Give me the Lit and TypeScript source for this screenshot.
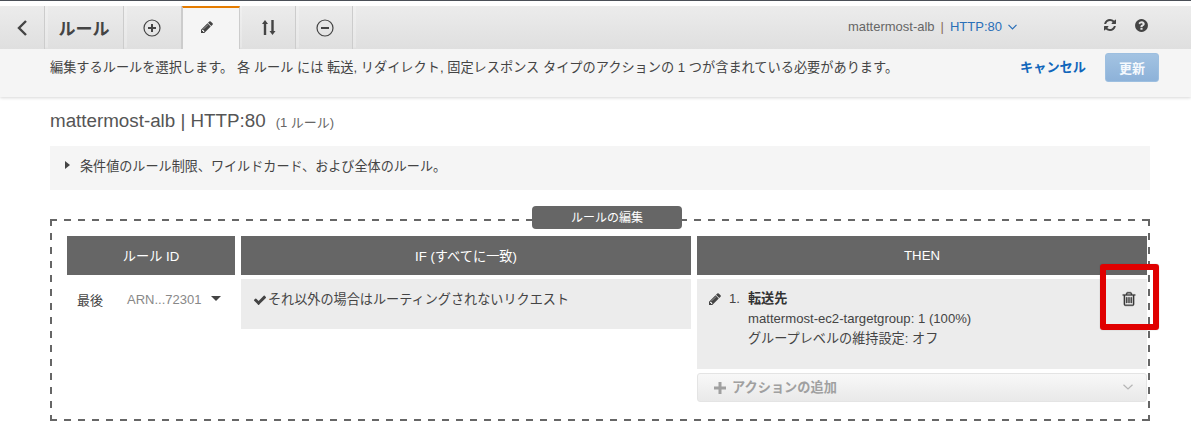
import { LitElement, html, css, svg } from "lit";
import { customElement } from "lit/decorators.js";

const P = {
  pencil: "M491 1536l91-91-235-235-91 91v107h128v128h107zm523-928q0-22-22-22-10 0-17 7l-542 542q-7 7-7 17 0 22 22 22 10 0 17-7l542-542q7-7 7-17zm-54-192l416 416-832 832h-416v-416zm683 96q0 53-37 90l-166 166-416-416 166-165q36-38 90-38 53 0 91 38l235 234q37 39 37 91z",
  trash: "M704 736v576q0 14-9 23t-23 9h-64q-14 0-23-9t-9-23v-576q0-14 9-23t23-9h64q14 0 23 9t9 23zm256 0v576q0 14-9 23t-23 9h-64q-14 0-23-9t-9-23v-576q0-14 9-23t23-9h64q14 0 23 9t9 23zm256 0v576q0 14-9 23t-23 9h-64q-14 0-23-9t-9-23v-576q0-14 9-23t23-9h64q14 0 23 9t9 23zm128 724v-948h-896v948q0 22 7 40.500t14.500 27 10.500 8.500h832q3 0 10.500-8.500t14.500-27 7-40.500zm-672-1076h448l-48-117q-7-9-17-11h-317q-10 2-17 11zm928 32v64q0 14-9 23t-23 9h-96v948q0 83-47 143.500t-113 60.500h-832q-66 0-113-58.500t-47-141.500v-952h-96q-14 0-23-9t-9-23v-64q0-14 9-23t23-9h309l70-167q15-37 54-63t79-26h320q40 0 79 26t54 63l70 167h309q14 0 23 9t9 23z",
  check: "M1671 566q0 40-28 68l-724 724-136 136q-28 28-68 28t-68-28l-136-136-362-362q-28-28-28-68t28-68l136-136q28-28 68-28t68 28l294 295 656-657q28-28 68-28t68 28l136 136q28 28 28 68z",
  refresh: "M1639 1056q0 5-1 7-64 268-268 434.500t-478 166.500q-146 0-282.500-55t-243.500-157l-129 129q-19 19-45 19t-45-19-19-45v-448q0-26 19-45t45-19h448q26 0 45 19t19 45-19 45l-137 137q71 66 161 102t187 36q134 0 250-65t186-179q11-17 53-117 8-23 30-23h192q13 0 22.500 9.500t9.500 22.500zm25-800v448q0 26-19 45t-45 19h-448q-26 0-45-19t-19-45 19-45l138-138q-148-137-349-137-134 0-250 65t-186 179q-11 17-53 117-8 23-30 23h-199q-13 0-22.500-9.500t-9.500-22.500v-7q65-268 270-434.500t480-166.500q146 0 284 55.500t245 156.500l130-129q19-19 45-19t45 19 19 45z",
  help: "M1024 1376v-192q0-14-9-23t-23-9h-192q-14 0-23 9t-9 23v192q0 14 9 23t23 9h192q14 0 23-9t9-23zm256-672q0-88-55.500-163t-138.500-116-170-41q-243 0-371 213-15 24 8 42l132 100q7 6 19 6 16 0 25-12 53-68 86-92 34-24 86-24 48 0 85.500 26t37.500 59q0 38-20 61t-68 45q-63 28-115.500 86.500t-52.500 125.500v36q0 14 9 23t23 9h192q14 0 23-9t9-23q0-19 21.500-49.500t54.500-49.500q32-18 49-28.500t46-35 44.500-48 28-60.500 12.500-81zm384 192q0 209-103 385.500t-279.500 279.500-385.500 103-385.500-103-279.500-279.500-103-385.500 103-385.500 279.500-279.500 385.500-103 385.500 103 279.500 279.500 103 385.500z",
};

const fa = (d: string, size: number, cls = "") =>
  html`<svg class=${cls} width=${size} height=${size} viewBox="0 0 1792 1792" fill="currentColor">${svg`<path d=${d}></path>`}</svg>`;

@customElement("app-root")
export class AppRoot extends LitElement {
  static styles = css`
    :host {
      display: block;
      width: 1191px;
      height: 432px;
      overflow: hidden;
      position: relative;
      background: #fff;
      color: #444;
      font: 13px "Liberation Sans", "Noto Sans CJK JP", sans-serif;
    }
    .topline { height: 1px; background: #4a4f57; margin-bottom: 5px; }
    .toolbar {
      display: flex;
      height: 43px;
      background: linear-gradient(#f0f0f0, #e6e6e6);
    }
    .cell {
      display: flex;
      align-items: center;
      justify-content: center;
      box-sizing: border-box;
      margin-right: 3px;
      border-right: 1px solid #ccc;
      background: linear-gradient(#ececec, #dfdfdf);
      color: #444;
    }
    .back { width: 45px; }
    .title { width: 76px; font-size: 17px; font-weight: bold; color: #444; padding-right: 3px; }
    .tab { width: 54px; }
    .tab.first { width: 55px; margin-right: 0; padding-right: 4px; }
    .tab.shift { padding-right: 2px; }
    .tab.active {
      width: 58px;
      margin-right: 2px;
      padding: 0 8px 4px 0;
      background: #f5f5f5;
      border-top: 2px solid #e57c00;
      border-left: 1px solid #ccc;
    }
    .right {
      display: flex;
      align-items: center;
      padding: 0 42px 2px 0;
      color: #666;
      font-size: 13px;
      height: 100%;
      box-sizing: border-box;
      background: linear-gradient(#ececec, #dfdfdf);
      flex: 1;
      justify-content: flex-end;
    }
    .bar-sep { margin: 0 6px; color: #8a6d5a; }
    .link { color: #2a6fb8; }
    .chev { margin-left: 6px; color: #2a6fb8; }
    .refresh { margin-left: 86px; color: #444; margin-top: -3px; }
    .help { margin-left: 17px; color: #444; margin-top: -3px; }

    .sub {
      height: 48px;
      box-sizing: border-box;
      background: #f5f5f5;
      box-shadow: 0 1px 3px rgba(0, 0, 0, 0.16);
      display: flex;
      align-items: flex-start;
      padding: 4px 32px 0 50px;
    }
    .sub-text { flex: 1; line-height: 19px; font-size: 13.2px; color: #444; padding-top: 5px; }
    .cancel { font-weight: bold; color: #1166bb; font-size: 13.2px; padding: 5px 19px 0 0; line-height: 19px; }
    .update {
      width: 54px;
      height: 29px;
      box-sizing: border-box;
      border-radius: 3px;
      border: 1px solid #9dbfe0;
      background: linear-gradient(#a3c3e2, #8db2d9);
      color: #f5f9fd;
      font-weight: bold;
      font-size: 13px;
      display: flex;
      align-items: center;
      justify-content: center;
    }

    .content { padding: 13px 41px 0 50px; }
    .h { display: flex; align-items: baseline; height: 22px; line-height: 22px; font-size: 18.8px; color: #555; }
    .h small { font-size: 13px; margin-left: 10px; color: #666; }
    .info {
      margin-top: 14px;
      height: 44px;
      box-sizing: border-box;
      background: #f5f5f5;
      display: flex;
      align-items: center;
      padding: 0 0 6px 15px;
      color: #444;
      font-size: 13.1px;
    }
    .tri { width: 0; height: 0; border-left: 5px solid #444; border-top: 4px solid transparent; border-bottom: 4px solid transparent; margin-right: 10px; }

    .box {
      margin-top: 29px;
      position: relative;
      box-sizing: border-box;
      height: 202px;
      padding: 17px 3px 0 17px;
      background:
        repeating-linear-gradient(90deg, #666 0 7px, transparent 7px 14px) top left / 100% 2px no-repeat,
        repeating-linear-gradient(90deg, #666 0 7px, transparent 7px 14px) bottom left / 100% 2px no-repeat,
        repeating-linear-gradient(180deg, #666 0 7px, transparent 7px 14px) top left / 2px 100% no-repeat,
        repeating-linear-gradient(180deg, #666 0 7px, transparent 7px 14px) top right / 2px 100% no-repeat;
    }
    .legend {
      position: absolute;
      left: 482px;
      top: -13px;
      width: 150px;
      height: 23px;
      border-radius: 4px;
      background: #666;
      color: #fff;
      font-size: 12px;
      display: flex;
      align-items: center;
      justify-content: center;
      padding-bottom: 3px;
      box-sizing: border-box;
    }
    .grid {
      display: grid;
      grid-template-columns: 168px 450px 450px;
      column-gap: 6px;
    }
    .th {
      height: 39px;
      background: #666;
      color: #fff;
      font-size: 13.2px;
      display: flex;
      align-items: center;
      justify-content: center;
    }
    .row { margin-top: 4px; }
    .id { display: flex; align-items: center; height: 40px; padding-left: 10px; font-size: 13px; color: #444; }
    .arn { color: #888; margin-left: 24px; }
    .caret { width: 0; height: 0; border-top: 5px solid #444; border-left: 5px solid transparent; border-right: 5px solid transparent; margin: 0 0 2px 10px; }
    .if {
      height: 50px;
      background: #ececec;
      display: flex;
      align-items: flex-start;
      padding: 12px 0 0 12px;
      box-sizing: border-box;
      line-height: 18px;
      color: #444;
      font-size: 13.13px;
    }
    .if svg { margin: 2px 1px 0 0; }
    .then {
      height: 90px;
      background: #ececec;
      box-sizing: border-box;
      padding: 10px 0 0 11px;
      display: flex;
      color: #444;
      font-size: 13.13px;
      line-height: 20px;
    }
    .then .pen { margin-top: 3px; }
    .num { margin-left: 7px; width: 19px; }
    .lines b { font-weight: bold; color: #333; }
    .trash { margin: 2px 10px 0 auto; color: #3a3a3a; stroke: currentColor; stroke-width: 40; }
    .add {
      margin-top: 4px;
      height: 29px;
      box-sizing: border-box;
      border: 1px solid #e4e4e4;
      border-radius: 3px;
      background: linear-gradient(#f8f8f8, #e9e9e9);
      display: flex;
      align-items: center;
      padding: 0 13px 2px 16px;
      color: #a0a0a0;
      font-weight: bold;
      font-size: 13.2px;
    }
    .add .plus { margin: 2px 6px 0 0; }
    .add .down { margin-left: auto; color: #b5b5b5; }
    .mark {
      position: absolute;
      left: 1100px;
      top: 264px;
      width: 59px;
      height: 66px;
      box-sizing: border-box;
      border: 6px solid #e00000;
      border-radius: 3px;
      box-shadow: 0 0 1px rgba(0, 0, 0, 0.4);
    }
  `;

  render() {
    return html`
      <div class="topline"></div>
      <div class="toolbar">
        <div class="cell back">
          <svg width="12" height="18" viewBox="0 0 12 18"><path d="M10 2 L3 9 L10 16" fill="none" stroke="#444" stroke-width="2.4"></path></svg>
        </div>
        <div class="cell title">ルール</div>
        <div class="cell tab first">
          <svg width="18" height="18" viewBox="0 0 18 18" fill="none" stroke="#444"><circle cx="9" cy="9" r="8" stroke-width="1.2"></circle><path d="M5 9h8M9 5v8" stroke-width="2"></path></svg>
        </div>
        <div class="cell tab active">${fa(P.pencil, 14)}</div>
        <div class="cell tab">
          <svg width="14" height="17" viewBox="0 0 14 17" fill="#444"><path d="M3 1 L6 5 H4.200 V16 H1.800 V5 H0 Z"></path><path d="M10 16 L7 12 H8.800 V1 H11.200 V12 H13 Z" transform="translate(0.500 0)"></path></svg>
        </div>
        <div class="cell tab shift">
          <svg width="18" height="18" viewBox="0 0 18 18" fill="none" stroke="#444"><circle cx="9" cy="9" r="8" stroke-width="1.2"></circle><path d="M5 9h8" stroke-width="2"></path></svg>
        </div>
        <div class="right">
          <span>mattermost-alb</span><span class="bar-sep">|</span><span class="link">HTTP:80</span>
          <svg class="chev" width="9" height="6" viewBox="0 0 9 6"><path d="M0.500 0.800 L4.500 4.800 L8.500 0.800" fill="none" stroke="#2a6fb8" stroke-width="1.200"></path></svg>
          ${fa(P.refresh, 14, "refresh")}
          ${fa(P.help, 15, "help")}
        </div>
      </div>
      <div class="sub">
        <div class="sub-text">編集するルールを選択します。 各 ルール には 転送, リダイレクト, 固定レスポンス タイプのアクションの 1 つが含まれている必要があります。</div>
        <div class="cancel">キャンセル</div>
        <div class="update">更新</div>
      </div>
      <div class="content">
        <div class="h">mattermost-alb | HTTP:80 <small>(1 ルール)</small></div>
        <div class="info"><span class="tri"></span>条件値のルール制限、ワイルドカード、および全体のルール。</div>
        <div class="box">
          <div class="legend">ルールの編集</div>
          <div class="grid">
            <div class="th">ルール ID</div>
            <div class="th">IF (すべてに一致)</div>
            <div class="th">THEN</div>
            <div class="row id">最後<span class="arn">ARN...72301</span><span class="caret"></span></div>
            <div class="row if">${fa(P.check, 14)}それ以外の場合はルーティングされないリクエスト</div>
            <div class="row">
              <div class="then">
                ${fa(P.pencil, 14, "pen")}
                <span class="num">1.</span>
                <div class="lines">
                  <div><b>転送先</b></div>
                  <div>mattermost-ec2-targetgroup: 1 (100%)</div>
                  <div>グループレベルの維持設定: オフ</div>
                </div>
                ${fa(P.trash, 16, "trash")}
              </div>
              <div class="add">
                <svg class="plus" width="12" height="12" viewBox="0 0 12 12" fill="#a0a0a0"><path d="M4.500 0h3v4.500H12v3H7.500V12h-3V7.500H0v-3h4.500z"></path></svg>
                アクションの追加
                <svg class="down" width="10" height="6" viewBox="0 0 10 6"><path d="M0.500 0.800 L5 5 L9.500 0.800" fill="none" stroke="#b5b5b5" stroke-width="1.200"></path></svg>
              </div>
            </div>
          </div>
        </div>
      </div>
      <div class="mark"></div>
    `;
  }
}
